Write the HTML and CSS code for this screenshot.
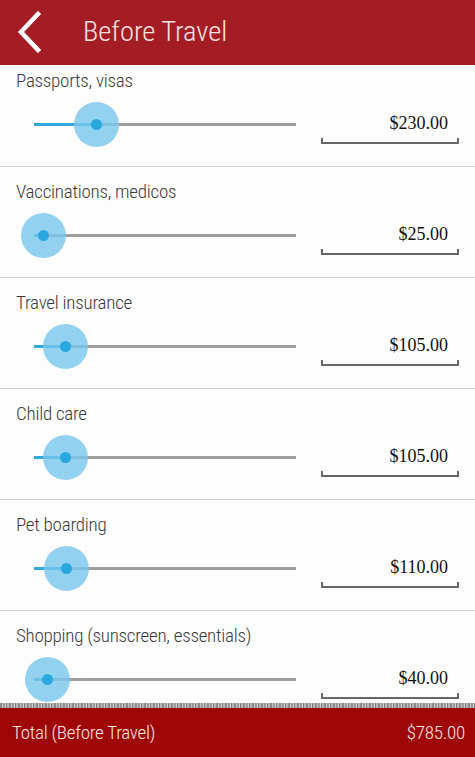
FILE: index.html
```html
<!DOCTYPE html>
<html lang="en">
  <head>
    <meta charset="UTF-8" />
    <meta name="viewport" content="width=device-width, initial-scale=1.0" />
    <link rel="stylesheet" href="styles.css">
    <title>Before Travel</title>
  </head>
  <body>
    <div class="app">
      <div class="header">
        <span class="back">
          <svg width="26" height="42" viewBox="0 0 26 42">
            <polyline points="22,3 5,21 22,39" fill="none" stroke="#fff" stroke-width="4.5" stroke-linecap="square" />
          </svg>
        </span>
        <div class="headerTitle">Before Travel</div>
      </div>

      <div class="main">
        <div class="list">
          <div class="row">
            <div class="label">Passports, visas</div>
            <div class="controls">
              <div class="slider">
                <div class="track"></div>
                <div class="fill" style="width: 23.7%"></div>
                <div class="thumb" style="left: 23.7%"><span class="dot"></span></div>
              </div>
              <div class="valueBox">
                <div class="value">$230.00</div>
                <div class="bracket"></div>
              </div>
            </div>
          </div>

          <div class="row">
            <div class="label">Vaccinations, medicos</div>
            <div class="controls">
              <div class="slider">
                <div class="track"></div>
                <div class="fill" style="width: 3.4%"></div>
                <div class="thumb" style="left: 3.4%"><span class="dot"></span></div>
              </div>
              <div class="valueBox">
                <div class="value">$25.00</div>
                <div class="bracket"></div>
              </div>
            </div>
          </div>

          <div class="row">
            <div class="label">Travel insurance</div>
            <div class="controls">
              <div class="slider">
                <div class="track"></div>
                <div class="fill" style="width: 11.8%"></div>
                <div class="thumb" style="left: 11.8%"><span class="dot"></span></div>
              </div>
              <div class="valueBox">
                <div class="value">$105.00</div>
                <div class="bracket"></div>
              </div>
            </div>
          </div>

          <div class="row">
            <div class="label">Child care</div>
            <div class="controls">
              <div class="slider">
                <div class="track"></div>
                <div class="fill" style="width: 11.8%"></div>
                <div class="thumb" style="left: 11.8%"><span class="dot"></span></div>
              </div>
              <div class="valueBox">
                <div class="value">$105.00</div>
                <div class="bracket"></div>
              </div>
            </div>
          </div>

          <div class="row">
            <div class="label">Pet boarding</div>
            <div class="controls">
              <div class="slider">
                <div class="track"></div>
                <div class="fill" style="width: 12.2%"></div>
                <div class="thumb" style="left: 12.2%"><span class="dot"></span></div>
              </div>
              <div class="valueBox">
                <div class="value">$110.00</div>
                <div class="bracket"></div>
              </div>
            </div>
          </div>

          <div class="row">
            <div class="label">Shopping (sunscreen, essentials)</div>
            <div class="controls">
              <div class="slider">
                <div class="track"></div>
                <div class="fill" style="width: 4.9%"></div>
                <div class="thumb" style="left: 4.9%"><span class="dot"></span></div>
              </div>
              <div class="valueBox">
                <div class="value">$40.00</div>
                <div class="bracket"></div>
              </div>
            </div>
          </div>
        </div>
      </div>

      <div class="footer">
        <div class="stripe"></div>
        <div class="totalBar">
          <span class="totalLabel">Total (Before Travel)</span>
          <span class="totalValue">$785.00</span>
        </div>
      </div>
    </div>
  </body>
</html>
```

FILE: styles.css
```css
* {
    box-sizing: border-box;
}

body {
    margin: 0;
    background: #fdfdfd;
    font-family: Roboto, "Liberation Sans", sans-serif;
    font-stretch: condensed;
}

.app {
    width: 475px;
    height: 757px;
    display: flex;
    flex-direction: column;
    overflow: hidden;
}

.header {
    height: 65px;
    flex-shrink: 0;
    background: #a51d24;
    display: flex;
    align-items: center;
    position: relative;
    z-index: 1;
}

.back {
    display: flex;
    margin-left: 16px;
    margin-top: -1px;
}

.headerTitle {
    margin-left: 41px;
    font-size: 28.5px;
    font-weight: 300;
    color: #fbe3e3;
    margin-top: -2px;
}

.main {
    flex: 1;
    overflow: hidden;
}

.list {
    margin-top: -10px;
}

.row {
    height: 111px;
    border-top: 1px solid #cdcdcd;
    padding: 14px 16px 0;
}

.row:first-child {
    border-top: none;
    padding-top: 15px;
}

.label {
    font-size: 19px;
    font-weight: 300;
    letter-spacing: -0.25px;
    line-height: 22px;
    color: #3a3a3a;
}

.controls {
    display: flex;
    align-items: flex-start;
    margin-top: 10px;
}

.slider {
    position: relative;
    width: 262px;
    height: 44px;
    margin-left: 18px;
}

.track,
.fill {
    position: absolute;
    left: 0;
    top: 21px;
    height: 3px;
}

.track {
    width: 100%;
    background: #9e9e9e;
}

.fill {
    background: #2fa9dc;
}

.thumb {
    position: absolute;
    top: 0;
    width: 45px;
    height: 45px;
    margin-left: -22px;
    border-radius: 50%;
    background: rgba(120, 198, 236, 0.8);
    display: grid;
    place-items: center;
}

.dot {
    width: 11px;
    height: 11px;
    border-radius: 50%;
    background: #29a8df;
}

.valueBox {
    width: 138px;
    margin-left: 25px;
    margin-top: 11px;
}

.value {
    font-family: "Liberation Serif", serif;
    font-stretch: normal;
    font-size: 18px;
    line-height: 20px;
    text-align: right;
    padding-right: 11px;
    color: #111;
}

.bracket {
    height: 6px;
    margin-top: 5px;
    border: 2px solid #666;
    border-top: none;
}

.footer {
    height: 54px;
    flex-shrink: 0;
    display: flex;
    flex-direction: column;
}

.stripe {
    height: 5px;
    background:
        repeating-linear-gradient(90deg, #8a8a8a 0 2px, #bdbdbd 2px 3px, #9a9a9a 3px 5px, #d0d0d0 5px 6px, #7d7d7d 6px 7px, #b4b4b4 7px 9px);
}

.totalBar {
    flex: 1;
    background: #9f0606;
    display: flex;
    align-items: center;
    justify-content: space-between;
    padding: 0 10px 0 12px;
    color: #f7e6e6;
    font-size: 19px;
    font-weight: 300;
    letter-spacing: -0.25px;
}
```
